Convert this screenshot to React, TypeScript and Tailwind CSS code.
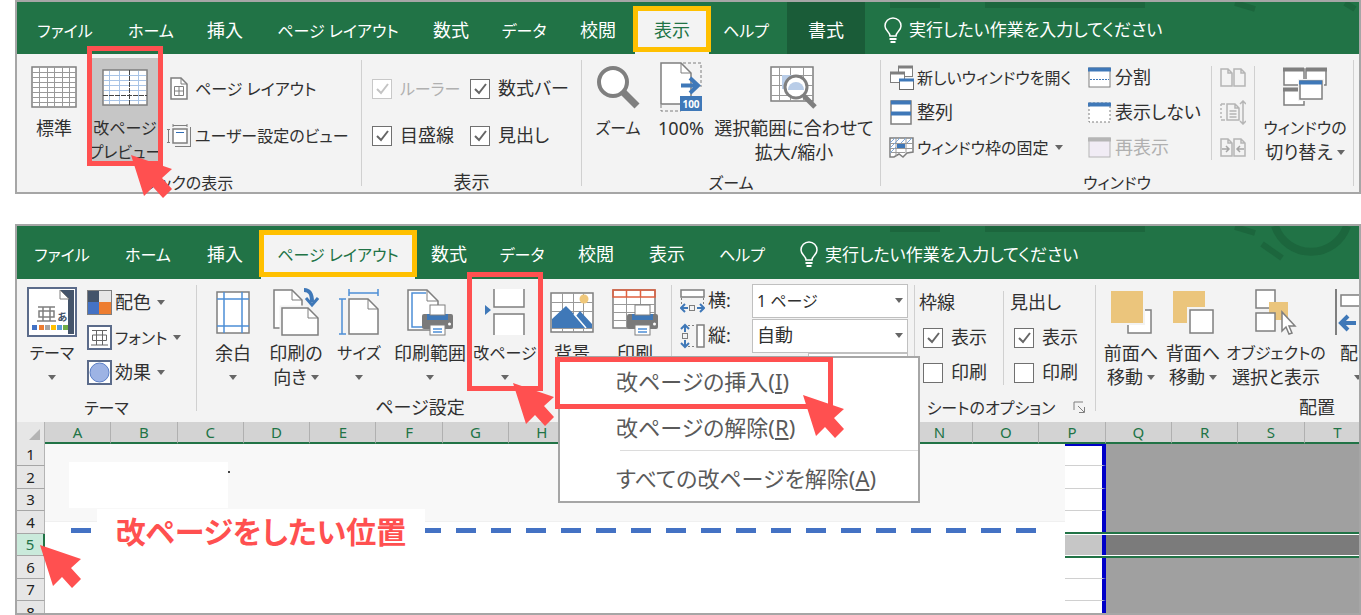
import type { ReactNode } from "react";

type TabItem = { label: string; width: string; kind?: "active" | "context" };

const VIEW_TABS: TabItem[] = [
  { label: "ファイル", width: "w-[96px]" },
  { label: "ホーム", width: "w-[76px]" },
  { label: "挿入", width: "w-[72px]" },
  { label: "ページ レイアウト", width: "w-[154px]" },
  { label: "数式", width: "w-[72px]" },
  { label: "データ", width: "w-[74px]" },
  { label: "校閲", width: "w-[74px]" },
  { label: "表示", width: "w-[74px]", kind: "active" },
  { label: "ヘルプ", width: "w-[74px]" },
  { label: "書式", width: "ml-1 w-[78px]", kind: "context" },
];

const LAYOUT_TABS: TabItem[] = [
  { label: "ファイル", width: "w-[90px]" },
  { label: "ホーム", width: "w-[82px]" },
  { label: "挿入", width: "w-[72px]" },
  { label: "ページ レイアウト", width: "w-[154px]", kind: "active" },
  { label: "数式", width: "w-[68px]" },
  { label: "データ", width: "w-[78px]" },
  { label: "校閲", width: "w-[70px]" },
  { label: "表示", width: "w-[72px]" },
  { label: "ヘルプ", width: "w-[78px]" },
];

const COLUMNS = "ABCDEFGHIJKLMNOPQRST".split("");
const ROWS = [1, 2, 3, 4, 5, 6, 7, 8];

/**
 * Sets kana-heavy labels one size below kanji labels, so both look even.
 */
function Label({ text }: { text: string }) {
  const kana = text.match(/[\u3040-\u30ff]/g)?.length ?? 0;
  return (
    <span className={kana / text.length > 0.6 ? "text-[16px]" : "text-[18px]"}>{text}</span>
  );
}

function Svg({ w, h, children }: { w: number; h: number; children: ReactNode }) {
  return (
    <svg
      width={w}
      height={h}
      viewBox={`0 0 ${w} ${h}`}
      fill="none"
      stroke="#7f7f7f"
      className="shrink-0"
      aria-hidden="true"
    >
      {children}
    </svg>
  );
}

/* ---------- icons ---------- */

function GridIcon() {
  return (
    <Svg w={46} h={42}>
      <rect x="1" y="1" width="44" height="40" fill="#fff" strokeWidth="1.500" />
      <path
        d="M8.500 1v40M16.500 1v40M23.500 1v40M31.500 1v40M38.500 1v40M1 6.500h44M1 11.500h44M1 16.500h44M1 21.500h44M1 26.500h44M1 31.500h44M1 36.500h44"
        stroke="#999"
      />
    </Svg>
  );
}

function BreakPreviewIcon() {
  return (
    <Svg w={46} h={37}>
      <rect x="1" y="1" width="44" height="35" fill="#fff" strokeWidth="1.500" />
      <path
        d="M7.500 2v33M17.500 2v33M36.500 2v33M2 6.500h42M2 11.500h42M2 16.500h42M2 21.500h42M2 31.500h42"
        stroke="#a9c4e6"
      />
      <path d="M27.500 1v35M1 26.500h44" stroke="#444" strokeDasharray="5 1" />
    </Svg>
  );
}

function PageSmallIcon() {
  return (
    <Svg w={18} h={23}>
      <path d="M1 1h10l6 6v15H1z" fill="#fff" strokeWidth="1.500" />
      <path d="M11 1v6h6M4.500 9.500h9v9h-9zM9 9.500v9M4.500 14h9" />
    </Svg>
  );
}

function CustomViewIcon() {
  return (
    <Svg w={24} h={23}>
      <rect x="6" y="5" width="14" height="14" fill="#fff" strokeWidth="1.500" />
      <path d="M6 1.500h14M6 0v3M20 0v3M1.500 5v14M0 5.500h3M0 18.500h3M23.500 3v19.500M8 22.500h16" />
      <path d="M9 8.500h8" stroke="#2f6db5" />
    </Svg>
  );
}

function ZoomIcon() {
  return (
    <Svg w={44} h={44}>
      <path d="M26 26l15 15" strokeWidth="7" />
      <circle cx="17" cy="17" r="14" fill="#fff" strokeWidth="4" />
    </Svg>
  );
}

function HundredIcon() {
  return (
    <Svg w={42} h={50}>
      <path d="M1 43v6h20M23 1h18v24" strokeDasharray="3 2" />
      <path d="M1 1h20l10 10v31H1z" fill="#fff" strokeWidth="1.500" />
      <path d="M21 1v10h10" />
      <path d="M21 23.500h16M30 16l8 7.500-8 7.500" stroke="#3f78b8" strokeWidth="4" />
      <rect x="20" y="34" width="22" height="15" fill="#3f78b8" stroke="none" />
      <text
        x="31"
        y="46"
        textAnchor="middle"
        fill="#fff"
        stroke="none"
        className="font-['Noto_Sans'] text-[10px] font-bold"
      >
        100
      </text>
    </Svg>
  );
}

function ZoomSelectionIcon() {
  return (
    <Svg w={48} h={44}>
      <path d="M1 2h42v34H1z" fill="#fff" strokeWidth="1.500" />
      <path
        d="M9.500 2v34M20.500 2v34M33.500 2v34M1 10.500h42M1 20.500h42M1 30.500h42"
        stroke="#999"
      />
      <path d="M12 10h12v14H12z" fill="#b9cde8" stroke="none" />
      <path d="M34 31l11 11" strokeWidth="5" />
      <circle cx="26" cy="22" r="11" fill="#fff" strokeWidth="3" />
      <path d="M18 25a8 8 0 1 1 16 0z" fill="#b9cde8" stroke="none" />
    </Svg>
  );
}

function NewWindowIcon() {
  return (
    <Svg w={25} h={26}>
      <rect x="9.500" y="1.500" width="14" height="10" fill="#fff" />
      <path d="M9 2h15" strokeWidth="3" />
      <rect x="1.500" y="7.500" width="14" height="10" fill="#fff" />
      <path d="M1 8h15" strokeWidth="3" />
      <rect x="10.500" y="14.500" width="14" height="10" fill="#fff" stroke="#6a6a6a" />
      <path d="M10 15h15" stroke="#3f78b8" strokeWidth="3" />
    </Svg>
  );
}

function ArrangeIcon() {
  return (
    <Svg w={22} h={25}>
      <rect x="1" y="1" width="20" height="23" fill="#fff" strokeWidth="1.500" />
      <path d="M1 2.500h20M1 13.500h20" stroke="#3f78b8" strokeWidth="4" />
    </Svg>
  );
}

function FreezeIcon() {
  return (
    <Svg w={25} h={21}>
      <path d="M1 1h23v14l-6 1-4 4-4-3-5 3H1z" fill="#fff" strokeWidth="1.500" />
      <path d="M1 6.500h23M1 11.500h23M1 15.500h15M7 1v18M17 1v15" stroke="#999" />
      <path d="M1 6l5-5M1 11L11 1M1 16l6-6M12 6l5-5M18 6l5-5" stroke="#7fa9d8" />
      <rect x="8" y="7" width="8" height="4" fill="#3f78b8" stroke="none" />
    </Svg>
  );
}

function PaneIcon({ variant }: { variant: "split" | "hide" | "show" }) {
  const muted = variant === "show";
  return (
    <Svg w={23} h={21}>
      <rect
        x="1"
        y="1"
        width="21"
        height="19"
        fill={muted ? "#f1ecf5" : "#fff"}
        stroke={muted ? "#b5b5b5" : "#7f7f7f"}
        strokeDasharray={variant === "hide" ? "2 2" : undefined}
      />
      <path d="M0 2.500h23" stroke={muted ? "#b5b5b5" : "#3f78b8"} strokeWidth="4" />
      {variant === "split" ? (
        <path d="M2 12.500h19" stroke="#3f78b8" strokeDasharray="2 1" />
      ) : null}
    </Svg>
  );
}

function TwoPagesIcon({ arrows = false }: { arrows?: boolean }) {
  return (
    <Svg w={26} h={19}>
      <path
        d="M1 1h7l4 4v13H1zM8 1v4h4M14 1h7l4 4v13H14zM21 1v4h4"
        stroke="#b5b5b5"
        strokeWidth="1.500"
      />
      {arrows ? (
        <path
          d="M2 11h7M6 8l3 3-3 3M24 11h-7M20 8l-3 3 3 3"
          stroke="#a5a5a5"
          strokeWidth="1.500"
        />
      ) : null}
    </Svg>
  );
}

function SyncScrollIcon() {
  return (
    <Svg w={26} h={25}>
      <g stroke="#b5b5b5" strokeWidth="1.500">
        <path d="M7 4h8l4 4v12H7zM15 4v4h4M9.500 11h7M9.500 14h7M9.500 17h7M5 4H1M5 20H1" />
        <path d="M1 4v16" strokeDasharray="2 2" />
        <path d="M23 1v23M20 4l3-3 3 3M20 21l3 3 3-3" />
      </g>
    </Svg>
  );
}

function SwitchWindowIcon() {
  return (
    <Svg w={44} h={40}>
      <path d="M1 2h20v16H1zM23 2h20v16H23zM1 22h20v16H1z" fill="#fff" strokeWidth="1.500" />
      <path d="M0 2.500h21M23 2.500h21M0 22.500h21" strokeWidth="4" />
      <rect x="17" y="14" width="22" height="18" fill="#fff" stroke="#f3f3f3" strokeWidth="4" />
      <rect x="17" y="14" width="22" height="18" fill="#fff" strokeWidth="1.500" />
      <path d="M16 15.500h23" stroke="#3f78b8" strokeWidth="4" />
    </Svg>
  );
}

function BulbIcon() {
  return (
    <Svg w={20} h={27}>
      <g stroke="#fff" strokeWidth="1.500">
        <path d="M7 19c0-4-5-5-5-10a8 8 0 0 1 16 0c0 5-5 6-5 10z" />
        <path d="M6.500 22h7M7.500 25h5" strokeWidth="2" />
      </g>
    </Svg>
  );
}

function ThemeIcon() {
  return (
    <Svg w={50} h={50}>
      <rect x="1" y="1" width="48" height="48" fill="#fff" stroke="#5b6b8a" strokeWidth="2" />
      <path d="M33 3h14v44h-6V12z" fill="#44546a" stroke="none" />
      <path d="M33 3v9h9z" fill="#fff" stroke="#7f7f7f" />
      <path d="M11 20h17M10 34h19M16 20v14M23 20v14M12 24h15v6H12z" strokeWidth="1.500" />
      <text
        x="30"
        y="34"
        fill="#44546a"
        stroke="none"
        className="font-['Noto_Sans_CJK_JP'] text-[12px] font-bold"
      >
        ぁ
      </text>
      <g stroke="none">
        <rect x="5" y="38" width="5" height="5" fill="#4472c4" />
        <rect x="12" y="38" width="5" height="5" fill="#ed7d31" />
        <rect x="18" y="38" width="5" height="5" fill="#a5a5a5" />
        <rect x="24" y="38" width="5" height="5" fill="#ffc000" />
        <rect x="30" y="38" width="5" height="5" fill="#5b9bd5" />
        <rect x="36" y="38" width="5" height="5" fill="#70ad47" />
      </g>
    </Svg>
  );
}

function ThemeColorsIcon() {
  return (
    <Svg w={25} h={25}>
      <g stroke="none">
        <path d="M0 0h25v25H0z" fill="#7f7f7f" />
        <path d="M1 1h11v11H1z" fill="#44546a" />
        <path d="M12 1h12v11H12z" fill="#e7e6e6" />
        <path d="M1 12h11v12H1z" fill="#4472c4" />
        <path d="M12 12h12v12H12z" fill="#ed7d31" />
      </g>
    </Svg>
  );
}

function ThemeFontsIcon() {
  return (
    <Svg w={25} h={25}>
      <rect x="1" y="1" width="23" height="23" fill="#fff" stroke="#5b6b8a" strokeWidth="2" />
      <path d="M5 5.500h15M4 20h17M9.500 5.500V20M15.500 5.500V20M5.500 10h14v5.500h-14z" stroke="#666" />
    </Svg>
  );
}

function ThemeEffectsIcon() {
  return (
    <Svg w={25} h={25}>
      <rect x="1" y="1" width="23" height="23" fill="#fff" stroke="#5b6b8a" strokeWidth="2" />
      <circle cx="12.500" cy="12.500" r="9.500" fill="#9db3e4" stroke="#5b7fc7" />
    </Svg>
  );
}

function MarginsIcon() {
  return (
    <Svg w={34} h={43}>
      <rect x="1" y="1" width="32" height="41" fill="#fff" strokeWidth="1.500" />
      <path d="M8 1v41M26 1v41M1 8h32M1 35h32" stroke="#4d8fd6" strokeWidth="1.500" />
    </Svg>
  );
}

function OrientationIcon() {
  return (
    <Svg w={46} h={48}>
      <path d="M1 2h18l10 10v28H1z" fill="#fff" strokeWidth="1.500" />
      <path d="M19 2v10h10" />
      <path d="M9 20h26l10 10v17H9z" fill="#fff" stroke="#f3f3f3" strokeWidth="5" />
      <path d="M9 20h26l10 10v17H9z" fill="#fff" strokeWidth="1.500" />
      <path d="M35 20v10h10" />
      <path d="M31 2c6 0 8 4 8 12" stroke="#3f78b8" strokeWidth="4" />
      <path d="M33 10l6 7 6-7" stroke="#3f78b8" strokeWidth="3" />
    </Svg>
  );
}

function SizeIcon() {
  return (
    <Svg w={40} h={46}>
      <path d="M10 10h19l10 10v25H10z" fill="#fff" strokeWidth="1.500" />
      <path d="M29 10v10h10" />
      <path d="M10 4h29M10 0v7M39 0v7M3 10v35M0 10h7M0 45h7" stroke="#4d8fd6" strokeWidth="1.500" />
    </Svg>
  );
}

// the printer glyph shared by the print area and print titles icons
function Printer() {
  return (
    <g>
      <rect x="15" y="26" width="31" height="15" rx="2" fill="#7a7a7a" stroke="none" />
      <path d="M20 26h21v6H20z" fill="#3f78b8" stroke="none" />
      <rect x="23" y="17" width="15" height="10" fill="#fff" />
      <rect x="23" y="37" width="15" height="10" fill="#fff" />
      <path d="M26 41h9M26 44h9" stroke="#4d8fd6" strokeWidth="1.500" />
      <circle cx="42.500" cy="36" r="1.500" fill="#fff" stroke="none" />
    </g>
  );
}

function PrintAreaIcon() {
  return (
    <Svg w={47} h={48}>
      <path d="M1 2h19l11 11v29H1z" fill="#fff" strokeWidth="1.500" />
      <path d="M20 2v11h11" />
      <path d="M19 5H5v34h12" stroke="#4d8fd6" strokeWidth="1.500" />
      <Printer />
    </Svg>
  );
}

function PrintTitlesIcon() {
  return (
    <Svg w={47} h={48}>
      <path d="M1 2h42v38H1z" fill="#fff" strokeWidth="1.500" />
      <path d="M14.500 2v38M28.500 2v38M1 16.500h42M1 24.500h42M1 32.500h42" stroke="#999" />
      <path d="M1 2h42v7H1zM14.500 2v7M28.500 2v7" stroke="#e0603f" strokeWidth="1.500" />
      <Printer />
    </Svg>
  );
}

function BreaksIcon() {
  return (
    <Svg w={40} h={46}>
      <path d="M9 0h31v18H9zM9 26h31v20H9z" fill="#fff" stroke="none" />
      <path d="M9 0v18h30V0M9 46V25h30v21" strokeWidth="1.500" />
      <path d="M0 16l6 5-6 5z" fill="#3f78b8" stroke="none" />
    </Svg>
  );
}

function BackgroundIcon() {
  return (
    <Svg w={44} h={41}>
      <path d="M1 1h42v39H1z" fill="#fff" strokeWidth="1.500" />
      <path
        d="M12.500 1v39M23.500 1v39M33.500 1v39M1 10.500h42M1 19.500h42M1 36.500h42"
        stroke="#999"
      />
      <circle cx="34" cy="7" r="4.500" fill="#efc77a" stroke="none" />
      <path d="M2 36V27L16 14l10 10 4-5 12 13v4z" fill="#3f78b8" stroke="none" />
      <path d="M24 22l12 14" stroke="#fff" strokeWidth="1.500" />
    </Svg>
  );
}

function ScaleWidthIcon() {
  return (
    <Svg w={25} h={24}>
      <rect x="1" y="1" width="23" height="7" fill="#fff" strokeWidth="1.500" />
      <path d="M1.500 9v7M23.500 9v7" strokeDasharray="2 2" />
      <rect x="9.500" y="16.500" width="5" height="5" />
      <path d="M1 19h7M5 15l-4 4 4 4M24 19h-7M20 15l4 4-4 4" stroke="#3f78b8" strokeWidth="2" />
    </Svg>
  );
}

function ScaleHeightIcon() {
  return (
    <Svg w={25} h={26}>
      <rect x="17" y="2" width="7" height="22" fill="#fff" strokeWidth="1.500" />
      <path d="M8 2.500h8M8 23.500h8" strokeDasharray="2 2" />
      <rect x="2.500" y="10.500" width="5" height="5" />
      <path d="M5 2v7M1 6l4-4 4 4M5 24v-7M1 20l4 4 4-4" stroke="#3f78b8" strokeWidth="2" />
    </Svg>
  );
}

function BringForwardIcon() {
  return (
    <Svg w={42} h={44}>
      <rect x="18" y="20" width="23" height="23" fill="#fff" strokeWidth="1.500" />
      <rect x="0" y="0" width="35" height="35" fill="#f3f3f3" stroke="none" />
      <rect x="1" y="1" width="32" height="32" fill="#ebc57c" stroke="none" />
    </Svg>
  );
}

function SendBackwardIcon() {
  return (
    <Svg w={42} h={44}>
      <rect x="1" y="1" width="32" height="32" fill="#ebc57c" stroke="none" />
      <rect x="15" y="17" width="27" height="27" fill="#f3f3f3" stroke="none" />
      <rect x="18" y="20" width="23" height="23" fill="#fff" strokeWidth="1.500" />
    </Svg>
  );
}

function SelectionPaneIcon() {
  return (
    <Svg w={42} h={46}>
      <rect x="1" y="1" width="19" height="18" fill="#fff" strokeWidth="1.500" />
      <rect x="14" y="13" width="19" height="18" fill="#ebc57c" stroke="none" />
      <rect x="1" y="24" width="19" height="18" fill="#fff" strokeWidth="1.500" />
      <path d="M27 23v19l4-4 3 7 3-1-3-7h6z" fill="#fff" strokeWidth="1.500" />
    </Svg>
  );
}

function AlignIcon() {
  return (
    <Svg w={46} h={46}>
      <path d="M1 0v46" strokeWidth="2" />
      <rect x="6" y="6" width="38" height="11" fill="#fff" strokeWidth="1.500" />
      <rect x="24" y="24" width="20" height="20" fill="#ebc57c" stroke="none" />
      <path d="M6 34h15M13 27l-7 7 7 7" stroke="#3f78b8" strokeWidth="4" />
    </Svg>
  );
}

function Caret() {
  return (
    <svg width="8" height="5" viewBox="0 0 8 5" fill="#666" className="shrink-0" aria-hidden="true">
      <path d="M0 0h8L4 5z" />
    </svg>
  );
}

function PointerArrow() {
  return (
    <svg width="42" height="43" viewBox="0 0 42 43" fill="#ff5050" aria-hidden="true">
      <path d="M0 0l41 14-10 9 10 11-9 9-10-11-9 9z" />
    </svg>
  );
}

/* ---------- ribbon parts ---------- */

function TabBar({
  tabs,
  searchId,
  height,
  swirl = false,
}: {
  tabs: TabItem[];
  searchId: string;
  height: string;
  swirl?: boolean;
}) {
  return (
    <div className={`relative flex bg-[#217346] text-white ${height}`}>
      <svg
        width="480"
        height="44"
        viewBox="0 0 480 44"
        fill="none"
        stroke="#1c663d"
        className="absolute top-0 right-0"
        aria-hidden="true"
      >
        <path d="M11 3h50M106 3h160M356 1l20 6" strokeWidth="6" />
        {swirl ? (
          <>
            <path d="M383 18l20 14" strokeWidth="6" />
            <path d="M396 0a38 38 0 0 0 72 0" strokeWidth="8" />
          </>
        ) : (
          <path d="M466 1l10 6" strokeWidth="6" />
        )}
      </svg>
      {tabs.map((tab) => {
        if (tab.kind === "active") {
          return (
            <button
              key={tab.label}
              type="button"
              className={`relative mt-1 shrink-0 bg-[#f3f3f3] whitespace-nowrap text-[#217346] ${tab.width}`}
            >
              <Label text={tab.label} />
              <span className="absolute -inset-x-0.5 top-0 bottom-0.5 border-5 border-[#ffc000]" />
            </button>
          );
        }
        return (
          <button
            key={tab.label}
            type="button"
            className={`relative shrink-0 pt-1 whitespace-nowrap ${tab.width} ${
              tab.kind === "context" ? "bg-[#1a5c38]" : ""
            }`}
          >
            <Label text={tab.label} />
          </button>
        );
      })}
      <div className="relative flex min-w-0 flex-1 items-center gap-1.5 pt-1 pl-[18px]">
        <label htmlFor={searchId}>
          <BulbIcon />
        </label>
        <input
          id={searchId}
          type="text"
          aria-label="操作アシスト"
          placeholder="実行したい作業を入力してください"
          className="min-w-0 flex-1 bg-transparent text-[17px] outline-none placeholder:text-white"
        />
      </div>
    </div>
  );
}

function Group({
  label,
  width,
  launcher = false,
  children,
}: {
  label: string;
  width: string;
  launcher?: boolean;
  children: ReactNode;
}) {
  return (
    <>
      <section className={`flex shrink-0 flex-col ${width}`} aria-label={label}>
        <div className="flex h-[118px]">{children}</div>
        <div className="flex h-5 items-center leading-5">
          <span className="flex-1 text-center whitespace-nowrap">
            <Label text={label} />
          </span>
          {launcher ? (
            <button type="button" aria-label={`${label}の詳細`} className="w-7 pl-1.5">
              <Svg w={13} h={12}>
                <path d="M1 9V1h9M5 5l6 6M11.500 6v5.500H6" />
              </Svg>
            </button>
          ) : null}
        </div>
      </section>
      <span className="my-1.5 w-px shrink-0 bg-[#d0d0d0]" />
    </>
  );
}

function BigButton({
  icon,
  lines,
  width,
  caret,
  pressed = false,
}: {
  icon: ReactNode;
  lines: string[];
  width: string;
  caret?: "inline" | "below";
  pressed?: boolean;
}) {
  return (
    <button
      type="button"
      className={`mt-1 flex h-[106px] shrink-0 flex-col items-center ${width} ${
        pressed ? "bg-[#c6c6c6]" : ""
      }`}
    >
      <span className="flex h-[58px] items-center">{icon}</span>
      {lines.map((line, index) => (
        <span key={line} className="flex h-6 items-center gap-1 leading-6 whitespace-nowrap">
          <Label text={line} />
          {caret === "inline" && index === lines.length - 1 ? <Caret /> : null}
        </span>
      ))}
      {caret === "below" ? (
        <span className="flex h-6 items-center">
          <Caret />
        </span>
      ) : null}
    </button>
  );
}

function SmallButton({
  icon,
  label,
  height,
  caret = false,
  disabled = false,
}: {
  icon: ReactNode;
  label: string;
  height: string;
  caret?: boolean;
  disabled?: boolean;
}) {
  return (
    <button
      type="button"
      disabled={disabled}
      className={`flex items-center gap-1 whitespace-nowrap disabled:text-[#b0b0b0] ${height}`}
    >
      <span className="flex w-6 justify-center">{icon}</span>
      <Label text={label} />
      {caret ? (
        <span className="ml-0.5">
          <Caret />
        </span>
      ) : null}
    </button>
  );
}

function Check({
  label,
  height,
  checked = false,
  disabled = false,
}: {
  label: string;
  height: string;
  checked?: boolean;
  disabled?: boolean;
}) {
  return (
    <label
      className={`flex items-center gap-2 whitespace-nowrap ${height} ${
        disabled ? "text-[#b0b0b0]" : ""
      }`}
    >
      <span className="grid size-5 shrink-0">
        <input
          type="checkbox"
          defaultChecked={checked}
          disabled={disabled}
          className="peer col-start-1 row-start-1 size-5 appearance-none border border-[#707070] bg-white disabled:border-[#c8c8c8]"
        />
        <svg
          viewBox="0 0 20 20"
          fill="none"
          stroke={disabled ? "#c4c4c4" : "#666"}
          strokeWidth="2"
          className="pointer-events-none invisible col-start-1 row-start-1 size-5 peer-checked:visible"
          aria-hidden="true"
        >
          <path d="M5 10l4 4 7-9" />
        </svg>
      </span>
      <Label text={label} />
    </label>
  );
}

function ScaleField({
  icon,
  label,
  value,
  size,
}: {
  icon: ReactNode;
  label: string;
  value: string;
  size: string;
}) {
  return (
    <label className="flex h-[35px] items-center">
      <span className="w-7">{icon}</span>
      <span className="w-11">{label}</span>
      <span className="grid h-[34px] w-[156px] items-center border border-[#c0c0c0] bg-white">
        <select
          className={`col-start-1 row-start-1 h-full w-full appearance-none bg-transparent pl-1 outline-none ${size}`}
        >
          <option>{value}</option>
        </select>
        <span className="pointer-events-none col-start-1 row-start-1 mr-1 justify-self-end">
          <Caret />
        </span>
      </span>
    </label>
  );
}

/* ---------- ribbons ---------- */

function ViewRibbon() {
  return (
    <div className="flex bg-[#f3f3f3]">
      <Group label="ブックの表示" width="w-[344px]">
        <div className="flex pl-1.5">
          <BigButton icon={<GridIcon />} lines={["標準"]} width="w-[62px]" />
          <span className="w-1.5" />
          <div className="relative self-start">
            <BigButton
              icon={<BreakPreviewIcon />}
              lines={["改ページ", "プレビュー"]}
              width="w-[68px]"
              pressed
            />
            <span className="absolute -inset-x-1 -top-2 -bottom-0.5 border-5 border-[#ff5050]" />
            <span className="absolute top-[101px] left-10 z-10">
              <PointerArrow />
            </span>
          </div>
          <div className="pt-[11px] pl-2">
            <SmallButton icon={<PageSmallIcon />} label="ページ レイアウト" height="h-[47px]" />
            <SmallButton icon={<CustomViewIcon />} label="ユーザー設定のビュー" height="h-[47px]" />
          </div>
        </div>
      </Group>

      <Group label="表示" width="w-[219px]">
        <div className="pt-[11px] pl-2.5">
          <div className="grid grid-cols-[98px_auto]">
            <Check label="ルーラー" height="h-[47px]" checked disabled />
            <Check label="数式バー" height="h-[47px]" checked />
            <Check label="目盛線" height="h-[47px]" checked />
            <Check label="見出し" height="h-[47px]" checked />
          </div>
        </div>
      </Group>

      <Group label="ズーム" width="w-[298px]">
        <BigButton icon={<ZoomIcon />} lines={["ズーム"]} width="w-[72px]" />
        <BigButton icon={<HundredIcon />} lines={["100%"]} width="w-[54px]" />
        <BigButton
          icon={<ZoomSelectionIcon />}
          lines={["選択範囲に合わせて", "拡大/縮小"]}
          width="w-[172px]"
        />
      </Group>

      <Group label="ウィンドウ" width="w-[472px]">
        <div className="w-[206px] pt-1.5 pl-2">
          <SmallButton icon={<NewWindowIcon />} label="新しいウィンドウを開く" height="h-[35px]" />
          <SmallButton icon={<ArrangeIcon />} label="整列" height="h-[35px]" />
          <SmallButton icon={<FreezeIcon />} label="ウィンドウ枠の固定" height="h-[35px]" caret />
        </div>
        <div className="w-[120px] pt-1.5">
          <SmallButton icon={<PaneIcon variant="split" />} label="分割" height="h-[35px]" />
          <SmallButton icon={<PaneIcon variant="hide" />} label="表示しない" height="h-[35px]" />
          <SmallButton icon={<PaneIcon variant="show" />} label="再表示" height="h-[35px]" disabled />
        </div>
        <span className="mx-1 my-3 w-px bg-[#d0d0d0]" />
        <div className="flex w-[34px] flex-col items-center pt-1.5">
          <button type="button" disabled aria-label="並べて比較" className="flex h-[35px] items-center">
            <TwoPagesIcon />
          </button>
          <button
            type="button"
            disabled
            aria-label="同時にスクロール"
            className="flex h-[35px] items-center"
          >
            <SyncScrollIcon />
          </button>
          <button
            type="button"
            disabled
            aria-label="ウィンドウの位置を元に戻す"
            className="flex h-[35px] items-center"
          >
            <TwoPagesIcon arrows />
          </button>
        </div>
        <span className="mx-1 my-3 w-px bg-[#d0d0d0]" />
        <BigButton
          icon={<SwitchWindowIcon />}
          lines={["ウィンドウの", "切り替え"]}
          width="w-[92px]"
          caret="inline"
        />
      </Group>
    </div>
  );
}

function BreaksMenu() {
  const item = "block w-full pl-14 text-left leading-[46px] whitespace-nowrap";
  return (
    <div
      role="menu"
      className="absolute top-[77px] left-[87px] z-20 h-[147px] w-[362px] border-2 border-[#a6a6a6] bg-white text-[22px] text-[#5a5a5a]"
    >
      <button type="button" role="menuitem" className={item}>
        改ページの挿入(<u className="underline-offset-2">I</u>)
      </button>
      <button type="button" role="menuitem" className={item}>
        改ページの解除(<u className="underline-offset-2">R</u>)
      </button>
      <hr className="mb-1 ml-[60px] border-[#dcdcdc]" />
      <button type="button" role="menuitem" className={item}>
        すべての改ページを解除(<u className="underline-offset-2">A</u>)
      </button>
      <span className="absolute -top-px -left-[5px] h-[52px] w-[278px] border-5 border-[#ff5050]" />
      <span className="absolute top-[37px] left-[243px]">
        <PointerArrow />
      </span>
    </div>
  );
}

function LayoutRibbon() {
  return (
    <div className="flex bg-[#f3f3f3] pb-[5px]">
      <Group label="テーマ" width="w-[179px]">
        <div className="flex pl-2">
          <BigButton icon={<ThemeIcon />} lines={["テーマ"]} width="w-[54px]" caret="below" />
          <div className="pt-1.5 pl-2">
            <SmallButton icon={<ThemeColorsIcon />} label="配色" height="h-[35px]" caret />
            <SmallButton icon={<ThemeFontsIcon />} label="フォント" height="h-[35px]" caret />
            <SmallButton icon={<ThemeEffectsIcon />} label="効果" height="h-[35px]" caret />
          </div>
        </div>
      </Group>

      <Group label="ページ設定" width="w-[474px]" launcher>
        <div className="flex pl-1.5">
          <BigButton icon={<MarginsIcon />} lines={["余白"]} width="w-[60px]" caret="below" />
          <BigButton
            icon={<OrientationIcon />}
            lines={["印刷の", "向き"]}
            width="w-[66px]"
            caret="inline"
          />
          <BigButton icon={<SizeIcon />} lines={["サイズ"]} width="w-[60px]" caret="below" />
          <BigButton icon={<PrintAreaIcon />} lines={["印刷範囲"]} width="w-[82px]" caret="below" />
          <div className="relative">
            <BigButton icon={<BreaksIcon />} lines={["改ページ"]} width="w-[68px]" caret="below" />
            <span className="absolute -inset-x-1 -top-[7px] bottom-1.5 border-5 border-[#ff5050]" />
            <span className="absolute top-[104px] left-[42px] z-30">
              <PointerArrow />
            </span>
            <BreaksMenu />
          </div>
          <BigButton icon={<BackgroundIcon />} lines={["背景"]} width="w-[66px]" />
          <BigButton icon={<PrintTitlesIcon />} lines={["印刷"]} width="w-[60px]" />
        </div>
      </Group>

      <Group label="拡大縮小印刷" width="w-[242px]" launcher>
        <div className="pt-1 pl-2">
          <ScaleField
            icon={<ScaleWidthIcon />}
            label="横:"
            value="1 ページ"
            size="text-[16px]"
          />
          <ScaleField icon={<ScaleHeightIcon />} label="縦:" value="自動" size="text-[18px]" />
          <input
            type="text"
            aria-label="拡大/縮小"
            className="ml-[128px] block h-[34px] w-[100px] border border-[#c0c0c0] bg-white"
          />
        </div>
      </Group>

      <Group label="シートのオプション" width="w-[180px]" launcher>
        <fieldset className="w-[88px] pt-1.5 pl-1">
          <legend className="sr-only">枠線</legend>
          <div className="h-[35px] leading-[35px]">枠線</div>
          <div className="pl-1">
            <Check label="表示" height="h-[35px]" checked />
            <Check label="印刷" height="h-[35px]" />
          </div>
        </fieldset>
        <span className="my-3 w-px bg-[#d0d0d0]" />
        <fieldset className="pt-1.5 pl-1.5">
          <legend className="sr-only">見出し</legend>
          <div className="h-[35px] leading-[35px]">見出し</div>
          <div className="pl-1">
            <Check label="表示" height="h-[35px]" checked />
            <Check label="印刷" height="h-[35px]" />
          </div>
        </fieldset>
      </Group>

      <Group label="配置" width="w-[442px]">
        <div className="flex pl-1">
          <BigButton
            icon={<BringForwardIcon />}
            lines={["前面へ", "移動"]}
            width="w-[62px]"
            caret="inline"
          />
          <BigButton
            icon={<SendBackwardIcon />}
            lines={["背面へ", "移動"]}
            width="w-[62px]"
            caret="inline"
          />
          <BigButton
            icon={<SelectionPaneIcon />}
            lines={["オブジェクトの", "選択と表示"]}
            width="w-[104px]"
          />
          <BigButton icon={<AlignIcon />} lines={["配置"]} width="w-[60px]" caret="below" />
        </div>
      </Group>
    </div>
  );
}

/* ---------- worksheet ---------- */

function Sheet() {
  return (
    <div className="relative h-[191px] overflow-hidden">
      <table className="w-[1354px] table-fixed border-separate border-spacing-0 text-[15px] leading-none">
        <thead>
          <tr className="h-[22px]">
            <th className="w-[28px] border-r border-[#b4b4b4] bg-[#e6e6e6] p-0 align-bottom">
              <svg
                width="11"
                height="11"
                viewBox="0 0 11 11"
                fill="#b4b4b4"
                className="mb-1 ml-3"
                aria-hidden="true"
              >
                <path d="M11 0v11H0z" />
              </svg>
            </th>
            {COLUMNS.map((name) => (
              <th
                key={name}
                scope="col"
                className="border-r border-b-2 border-r-[#b0b0b0] border-b-[#217346] bg-[#d3d3d3] p-0 font-normal text-[#217346]"
              >
                {name}
              </th>
            ))}
          </tr>
        </thead>
        <tbody>
          {ROWS.map((row) => {
            const selected = row === 5;
            return (
              <tr key={row} className="odd:h-[22px] even:h-[23px]">
                <th
                  scope="row"
                  className={`border-b border-b-[#a6a6a6] p-0 font-normal ${
                    selected
                      ? "border-r-2 border-r-[#217346] bg-[#caeadb] text-[#217346]"
                      : "border-r border-r-[#b4b4b4] bg-[#e6e6e6] text-[#222]"
                  }`}
                >
                  {row}
                </th>
                <td colSpan={15} className="p-0" />
                <td
                  className={`border-r-4 border-r-[#0000c8] p-0 ${
                    selected ? "bg-[#c6c6c6]" : "border-b border-b-[#d0d0d0] bg-white"
                  } ${row === 1 ? "border-t-2 border-t-[#0000c8]" : ""}`}
                />
                <td colSpan={4} className={`p-0 ${selected ? "bg-[#7b7b7b]" : "bg-[#a0a0a0]"}`} />
              </tr>
            );
          })}
        </tbody>
      </table>

      {/* outline of the selected row */}
      <div className="absolute top-[110px] right-0 left-[28px] h-[26px] border-y-2 border-[#217346]">
        <div className="h-full border-y border-white" />
      </div>

      {/* printable page lying over the cells */}
      <div className="absolute top-[22px] left-[28px] h-[169px] w-[1020px] bg-white">
        <div className="h-[78px] border-b border-[#f0f0f0] bg-[#f8f8f8]" />
        <div className="absolute top-[18px] left-6 h-[46px] w-[159px] bg-white">
          <span className="absolute top-[9px] -right-0.5 h-0.5 w-0.5 bg-[#444]" />
        </div>
        <svg
          width="966"
          height="5"
          viewBox="0 0 966 5"
          stroke="#4472c4"
          strokeWidth="5"
          strokeDasharray="20 15"
          className="absolute top-[84px] left-[26px]"
          aria-hidden="true"
        >
          <path d="M0 2.500h966" />
        </svg>
        <p className="absolute top-[65px] left-[52px] w-[328px] bg-white text-center text-[30px] leading-[46px] font-bold whitespace-nowrap text-[#ff5050]">
          改ページをしたい位置
        </p>
      </div>

      <span className="absolute top-[123px] left-[23px]">
        <PointerArrow />
      </span>
    </div>
  );
}

export default function App() {
  return (
    <main className="overflow-hidden bg-white pl-[15px] font-['Noto_Sans','Noto_Sans_CJK_JP',sans-serif] text-[18px] text-[#303030] [font-feature-settings:'palt']">
      <div className="border-2 border-[#a6a6a6]">
        <TabBar tabs={VIEW_TABS} searchId="view-search" height="h-[52px]" />
        <ViewRibbon />
      </div>
      <div className="mt-[30px] overflow-hidden border-2 border-[#a6a6a6]">
        <TabBar tabs={LAYOUT_TABS} searchId="layout-search" height="h-[53px]" swirl />
        <LayoutRibbon />
        <Sheet />
      </div>
    </main>
  );
}
